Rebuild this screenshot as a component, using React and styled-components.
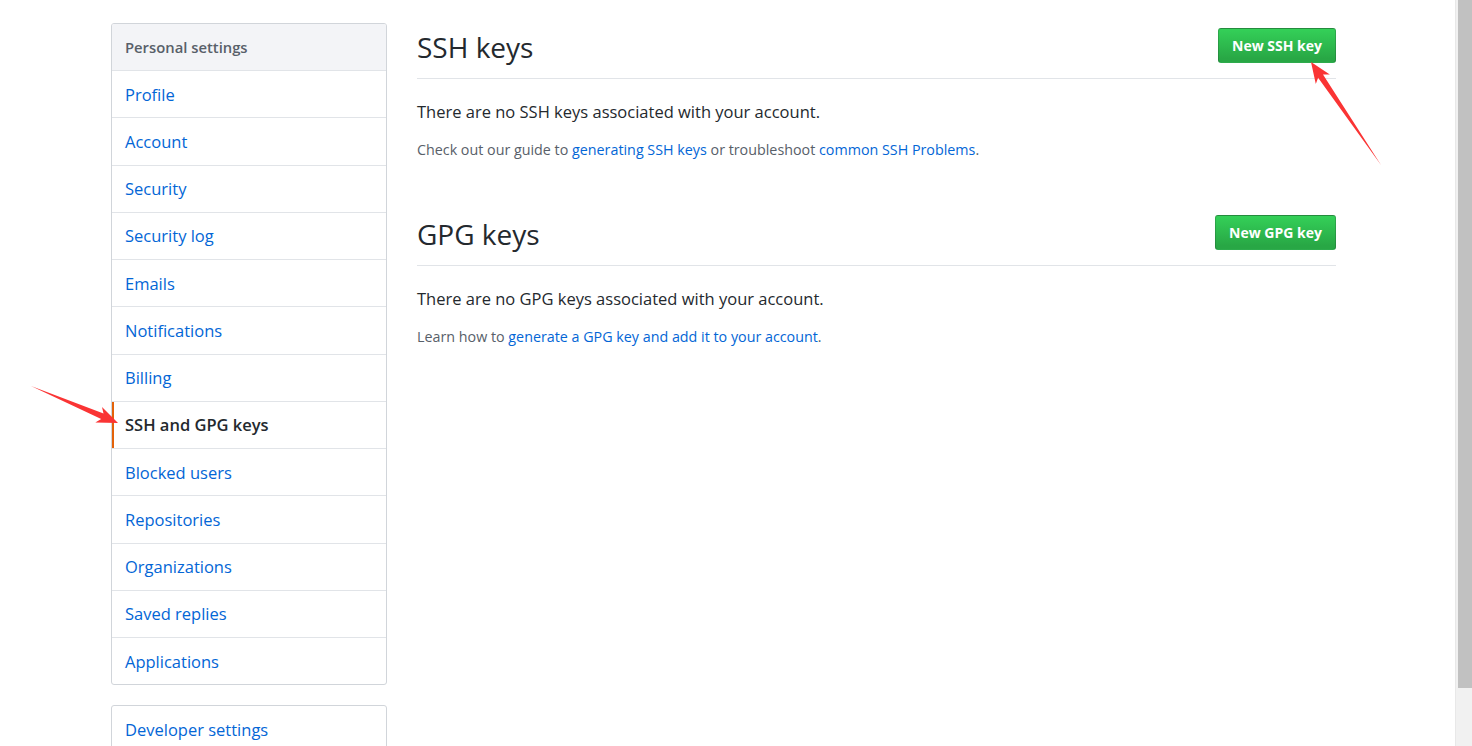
import React from 'react';
import styled, { createGlobalStyle } from 'styled-components';

const GlobalStyle = createGlobalStyle`
  html, body {
    margin: 0;
    padding: 0;
    background: #fff;
  }
  body {
    font-family: "Open Sans", "Noto Sans", "Liberation Sans", sans-serif;
    color: #24292e;
    overflow: hidden;
  }
`;

const Page = styled.div`
  position: relative;
  width: 1472px;
  height: 746px;
  overflow: hidden;
`;

const Layout = styled.div`
  display: flex;
  align-items: flex-start;
  gap: 30px;
  padding: 23px 0 0 111px;
`;

const Sidebar = styled.div`
  width: 276px;
  flex-shrink: 0;
  display: flex;
  flex-direction: column;
  gap: 20px;
`;

const Menu = styled.nav`
  border: 1px solid #d1d5da;
  border-radius: 3px;
  background: #fff;
  overflow: hidden;
`;

const MenuHeading = styled.div`
  height: 46px;
  display: flex;
  align-items: center;
  padding: 0 13px;
  background: #f3f4f7;
  border-bottom: 1px solid #e1e4e8;
  color: #586069;
  font-size: 14.8px;
  font-weight: 600;
`;

const MenuItem = styled.a`
  display: flex;
  align-items: center;
  height: 46.25px;
  padding: 0 13px;
  font-size: 16.5px;
  text-decoration: none;
  color: ${(p) => (p.$selected ? '#24292e' : '#0366d6')};
  font-weight: ${(p) => (p.$selected ? 600 : 400)};
  border-top: ${(p) => (p.$first ? 'none' : '1px solid #e1e4e8')};
  box-shadow: ${(p) => (p.$selected ? 'inset 2px 0 0 #e36209' : 'none')};
`;

const Main = styled.main`
  width: 919px;
`;

const Subhead = styled.div`
  display: flex;
  align-items: flex-start;
  justify-content: space-between;
  padding: 2px 0 8px;
  border-bottom: 1px solid #e1e4e8;
  margin-top: ${(p) => p.$top || 0}px;
`;

const Heading = styled.h2`
  margin: 0;
  font-size: 28px;
  font-weight: 400;
  line-height: 45px;
  color: #24292e;
`;

const GreenButton = styled.button`
  margin-top: 3px;
  height: 35px;
  padding: 0 13px;
  font-family: inherit;
  font-size: 14px;
  font-weight: 700;
  color: #fff;
  background: linear-gradient(-180deg, #34d058 0%, #28a745 90%);
  border: 1px solid rgba(27, 31, 35, 0.2);
  border-radius: 3px;
`;

const Lead = styled.p`
  margin: 21px 0 0;
  font-size: 16.5px;
  line-height: 24px;
  color: #24292e;
`;

const Note = styled.p`
  margin: 15px 0 0;
  font-size: 14.3px;
  line-height: 22px;
  color: #586069;
`;

const Link = styled.a`
  color: #0366d6;
  text-decoration: none;
`;

const Scrollbar = styled.div`
  position: absolute;
  top: 0;
  right: 0;
  width: 17px;
  height: 746px;
  background: #f1f1f1;
  border-left: 1px solid #e8e8e8;
  box-sizing: border-box;
`;

const Thumb = styled.div`
  margin-left: 2px;
  height: 688px;
  background: #c1c1c1;
`;

const Annotations = styled.svg`
  position: absolute;
  top: 0;
  left: 0;
  pointer-events: none;
`;

const items = [
  'Profile',
  'Account',
  'Security',
  'Security log',
  'Emails',
  'Notifications',
  'Billing',
  'SSH and GPG keys',
  'Blocked users',
  'Repositories',
  'Organizations',
  'Saved replies',
  'Applications',
];

// thin tapered arrow: tail -> tip
const arrowPoints = (tx, ty, hx, hy) => {
  const dx = hx - tx;
  const dy = hy - ty;
  const len = Math.hypot(dx, dy);
  const ux = dx / len;
  const uy = dy / len;
  const px = -uy;
  const py = ux;
  const head = 21;
  const wing = 8.5;
  const neck = 3;
  const bx = hx - ux * head;
  const by = hy - uy * head;
  const nx = hx - ux * (head - 4);
  const ny = hy - uy * (head - 4);
  const pts = [
    [hx, hy],
    [bx + px * wing, by + py * wing],
    [nx + px * neck, ny + py * neck],
    [tx, ty],
    [nx - px * neck, ny - py * neck],
    [bx - px * wing, by - py * wing],
  ];
  return pts.map((p) => p.map((v) => v.toFixed(1)).join(',')).join(' ');
};

export default function App() {
  return (
    <Page>
      <GlobalStyle />
      <Layout>
        <Sidebar>
          <Menu>
            <MenuHeading>Personal settings</MenuHeading>
            {items.map((name, i) => (
              <MenuItem key={name} $first={i === 0} $selected={name === 'SSH and GPG keys'}>
                {name}
              </MenuItem>
            ))}
          </Menu>
          <Menu>
            <MenuItem $first>Developer settings</MenuItem>
          </Menu>
        </Sidebar>
        <Main>
          <Subhead>
            <Heading>SSH keys</Heading>
            <GreenButton>New SSH key</GreenButton>
          </Subhead>
          <Lead>There are no SSH keys associated with your account.</Lead>
          <Note>
            Check out our guide to <Link>generating SSH keys</Link> or troubleshoot{' '}
            <Link>common SSH Problems</Link>.
          </Note>
          <Subhead $top={49}>
            <Heading>GPG keys</Heading>
            <GreenButton>New GPG key</GreenButton>
          </Subhead>
          <Lead>There are no GPG keys associated with your account.</Lead>
          <Note>
            Learn how to <Link>generate a GPG key and add it to your account</Link>.
          </Note>
        </Main>
      </Layout>
      <Scrollbar>
        <Thumb />
      </Scrollbar>
      <Annotations width="1472" height="746" viewBox="0 0 1472 746">
        <polygon points={arrowPoints(1381, 165, 1311, 62)} fill="#fa3434" />
        <polygon points={arrowPoints(31, 386, 118, 423)} fill="#fa3434" />
      </Annotations>
    </Page>
  );
}
